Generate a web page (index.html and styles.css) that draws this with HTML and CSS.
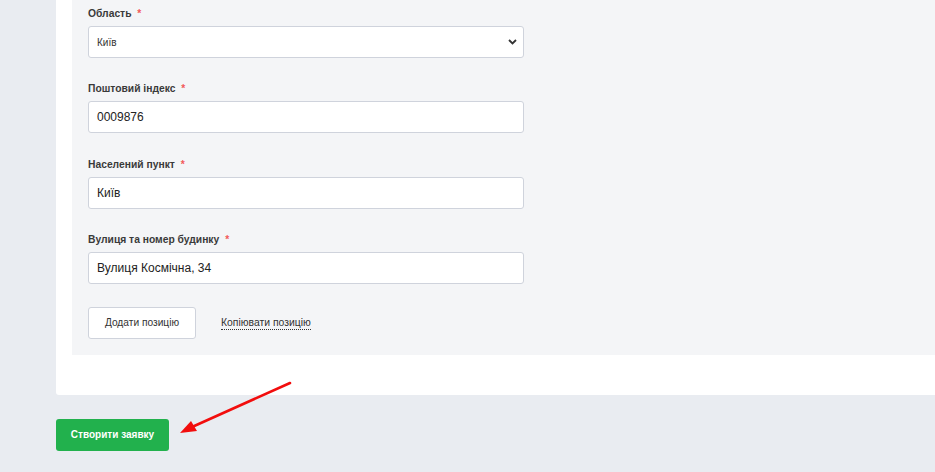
FILE: index.html
```html
<!DOCTYPE html>
<html lang="uk">
<head>
<meta charset="utf-8">
<title>Заявка</title>
<link rel="stylesheet" href="styles.css">
</head>
<body>
<div class="page">
  <div class="card">
    <div class="panel">
      <div class="field">
        <label class="label">Область <span class="req">*</span></label>
        <div class="select">
          <span class="select-text">Київ</span>
          <svg class="chev" width="9" height="6" viewBox="0 0 9 6"><path d="M1 1l3.5 3.5L8 1" fill="none" stroke="#333" stroke-width="1.8"/></svg>
        </div>
      </div>
      <div class="field">
        <label class="label">Поштовий індекс <span class="req">*</span></label>
        <div class="input">0009876</div>
      </div>
      <div class="field">
        <label class="label">Населений пункт <span class="req">*</span></label>
        <div class="input">Київ</div>
      </div>
      <div class="field">
        <label class="label">Вулиця та номер будинку <span class="req">*</span></label>
        <div class="input">Вулиця Космічна, 34</div>
      </div>
      <div class="actions">
        <button class="btn-outline">Додати позицію</button>
        <a class="link">Копіювати позицію</a>
      </div>
    </div>
  </div>
  <div class="submit-row">
    <button class="btn-green">Створити заявку</button>
  </div>
  <svg class="arrow" width="935" height="472" viewBox="0 0 935 472">
    <line x1="290" y1="383" x2="192" y2="427" stroke="#f20d0d" stroke-width="2.6" stroke-linecap="round"/>
    <polygon points="180,433 191,421 197,431" fill="#f20d0d"/>
  </svg>
</div>
</body>
</html>
```
FILE: styles.css
```css
* { box-sizing: border-box; }
html, body { margin: 0; padding: 0; }
body {
  background: #e9ecf1;
  font-family: "Liberation Sans", Arial, sans-serif;
  color: #333;
  width: 935px;
  height: 472px;
  overflow: hidden;
}
.page {
  position: relative;
  height: 472px;
}
.card {
  margin-left: 56px;
  background: #fff;
  padding: 0 0 40px 16px;
  border-bottom-left-radius: 3px;
}
.panel {
  background: #f4f5f7;
  padding: 7px 16px 16px 16px;
}
.field {
  width: 436px;
  margin-bottom: 24.4px;
}
.label {
  display: block;
  font-size: 10.3px;
  font-weight: bold;
  line-height: 14px;
  color: #3a3a3a;
  margin-bottom: 5px;
}
.req {
  color: #f25a5a;
  margin-left: 3px;
}
.select, .input {
  height: 32px;
  background: #fff;
  border: 1px solid #cfd3dc;
  border-radius: 3px;
  display: flex;
  align-items: center;
  padding: 0 8px;
}
.select {
  justify-content: space-between;
  padding-right: 6px;
}
.select-text {
  font-size: 10px;
  color: #333;
}
.input {
  font-size: 12px;
  color: #222;
}
.chev { display: block; }
.actions {
  display: flex;
  align-items: center;
  gap: 25px;
  margin-top: -2px;
}
.btn-outline {
  height: 32px;
  width: 108px;
  background: #fff;
  border: 1px solid #cfd3dc;
  border-radius: 3px;
  font-family: inherit;
  font-size: 10.2px;
  color: #333;
  padding: 0;
}
.link {
  font-size: 10.4px;
  color: #333;
  text-decoration: none;
  border-bottom: 1px dotted #333;
  line-height: 12px;
  margin-top: 2px;
}
.submit-row {
  padding: 24px 0 0 56px;
}
.btn-green {
  height: 32px;
  width: 113px;
  background: #22b14d;
  border: none;
  border-radius: 3px;
  color: #fff;
  font-family: inherit;
  font-weight: bold;
  font-size: 10px;
  padding: 0;
}
.arrow {
  position: absolute;
  left: 0;
  top: 0;
  pointer-events: none;
}
```
